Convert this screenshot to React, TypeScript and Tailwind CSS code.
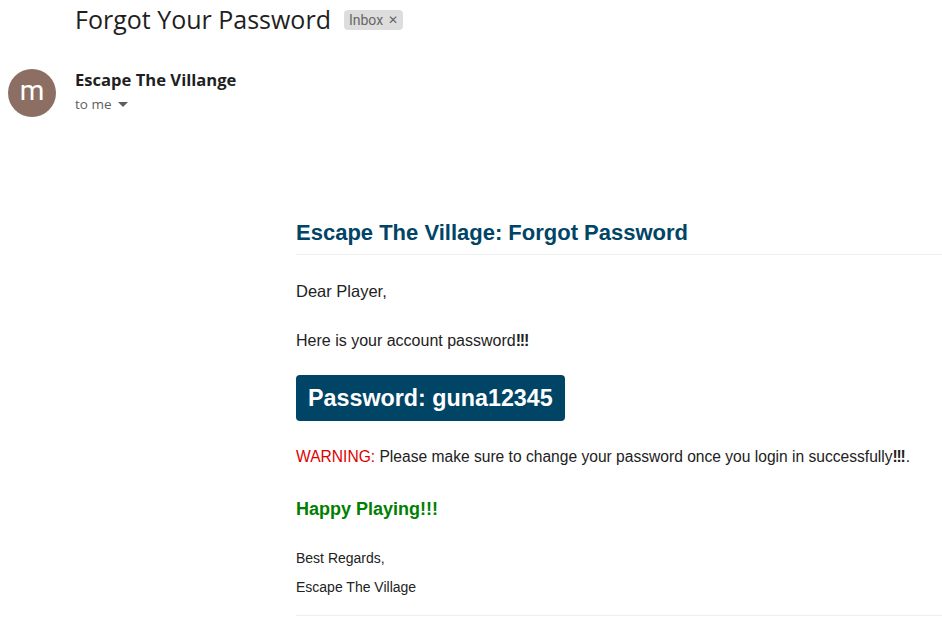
const Bangs = () => (
  <span className="font-bold tracking-[-1.2px] pr-[1.2px]">!!!</span>
);

const App = () => {
  return (
    <div className="w-[942px] h-[620px] bg-white overflow-hidden font-['Roboto',sans-serif]">
      <div className="flex items-center pl-[75px] pt-[2px] h-[36px]">
        <h1 className="text-[25px] leading-[32px] text-[#1f1f1f] font-['Open_Sans',sans-serif]">
          Forgot Your Password
        </h1>
        <span className="ml-[13px] mt-[2px] flex items-center h-[20px] px-[5px] rounded-[4px] bg-[#dddddd] text-[14px] text-[#666666]">
          Inbox <span className="ml-[5px] text-[12px]">✕</span>
        </span>
      </div>
      <div className="flex pl-[8px] mt-[33px]">
        <div className="w-[48px] h-[48px] rounded-full bg-[#8d6e63] flex items-center justify-center text-white text-[28px] leading-none pb-[4px]">
          m
        </div>
        <div className="ml-[19px] font-['Open_Sans',sans-serif]">
          <div className="text-[16.6px] font-bold text-[#1f1f1f] leading-[22px]">
            Escape The Villange
          </div>
          <div className="flex items-center text-[13.5px] text-[#5e5e5e] leading-[20px] mt-[3px]">
            to me
            <span className="ml-[6px] w-0 h-0 border-l-[5px] border-r-[5px] border-t-[5px] border-l-transparent border-r-transparent border-t-[#5e5e5e]" />
          </div>
        </div>
      </div>
      <div className="ml-[296px] mt-[101px] font-['Liberation_Sans',Arial,sans-serif] text-[#222222]">
        <h2 className="text-[22px] font-bold text-[#004466] leading-[30px] pb-[6px] border-b border-[#eeeeee]">
          Escape The Village: Forgot Password
        </h2>
        <p className="text-[16.5px] mt-[24px] leading-[24px]">Dear Player,</p>
        <p className="text-[16px] mt-[26px] leading-[24px]">
          Here is your account password<Bangs />
        </p>
        <div className="mt-[22px] inline-block bg-[#004466] text-white font-bold text-[23.3px] leading-[46px] px-[12px] rounded-[4px]">
          Password: guna12345
        </div>
        <p className="text-[15.6px] mt-[24px] leading-[24px]">
          <span className="text-[#e00000]">WARNING:</span> Please make sure to change your password once you login in successfully<Bangs />.
        </p>
        <p className="text-[18px] font-bold text-[#008000] mt-[28px] leading-[24px]">Happy Playing!!!</p>
        <p className="text-[14px] mt-[27px] leading-[20px]">Best Regards,</p>
        <p className="text-[14px] mt-[9px] leading-[20px]">Escape The Village</p>
        <div className="mt-[18px] border-b border-[#eeeeee]" />
      </div>
    </div>
  );
};

export default App;
